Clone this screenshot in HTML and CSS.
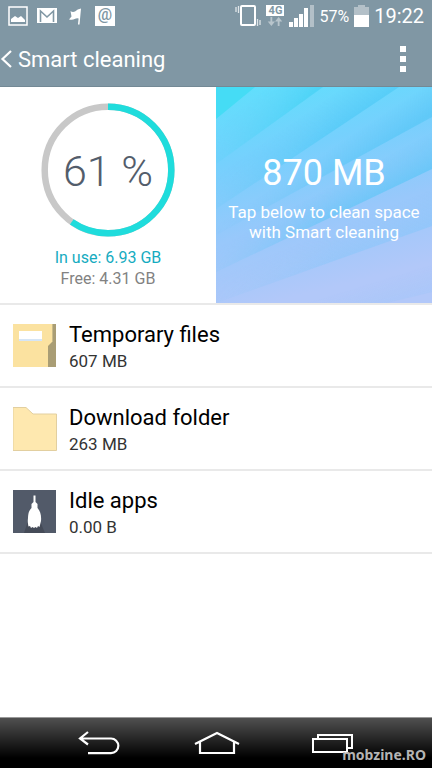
FILE: index.html
```html
<!DOCTYPE html>
<html lang="en">
<head>
<meta charset="utf-8">
<meta name="viewport" content="width=device-width, initial-scale=1">
<title>Smart cleaning</title>
<link rel="stylesheet" href="styles.css">
</head>
<body>
<header class="header">
  <div class="status">
    <div class="status-left">
      <svg width="20" height="20" viewBox="0 0 20 20"><rect x="1" y="1" width="18" height="18" fill="none" stroke="#fff" stroke-width="1.5"/><path d="M3 16v-3l4-3 3 2 3-2 4 4v2z" fill="#fff"/></svg>
      <svg width="20" height="20" viewBox="0 0 20 20"><path d="M0 2h20v15H0z" fill="#fff"/><path d="M3.500 16V5l6.500 6 6.500-6v11" fill="none" stroke="#8097a4" stroke-width="1.600"/></svg>
      <svg width="20" height="20" viewBox="0 0 20 20"><path d="M4.500 5q2 1.500 4.500 0.500 2.500-2.500 6-3l-1.500 16H12l.6-6q-2-.5-4 .6-2 1.200-5.600.4l2.500-3z" fill="#fff"/></svg>
      <span class="at">@</span>
    </div>
    <div class="status-right">
      <svg width="26" height="24" viewBox="0 0 26 24"><rect x="6" y="2" width="14" height="19" rx="1" fill="none" stroke="#fff" stroke-width="2"/><path d="M1 3v5M3.500 2v7M22.500 15v7M25 16v5" stroke="#dfe5e8" stroke-width="1.300"/></svg>
      <div class="network">
        <span class="network-type">4G</span>
        <svg width="16" height="10" viewBox="0 0 16 11"><path d="M3 0h2v5h3l-4 5-4-5h3zM11 10h2V5h3l-4-5-4 5h3z" fill="#b8c5cc"/></svg>
      </div>
      <svg width="25" height="24" viewBox="0 0 25 24"><path d="M0 18h4v5H0zM5 14h4v9H5zM10 10h4v13h-4zM15 4h4v19h-4z" fill="#fff"/><path d="M21 1h4v22h-4z" fill="#b3c0c8"/></svg>
      <span class="percent">57%</span>
      <svg width="15" height="24" viewBox="0 0 15 24"><path d="M4 1h7v2h4v9H0V3h4z" fill="#b3c0c8"/><path d="M0 11h15v12H0z" fill="#fff"/></svg>
      <time class="clock">19:22</time>
    </div>
  </div>
  <div class="bar">
    <button class="back" type="button">
      <svg width="12" height="20" viewBox="0 0 12 20"><path d="M11 2L2.500 10l8.500 8" fill="none" stroke="#fff" stroke-width="2.200"/></svg>
      <span>Smart cleaning</span>
    </button>
    <button class="more" type="button" aria-label="More options">
      <svg width="6" height="26" viewBox="0 0 6 26"><path d="M0 0h6v6H0zM0 10h6v6H0zM0 20h6v6H0z" fill="#fff"/></svg>
    </button>
  </div>
</header>
<main class="content">
  <section class="summary">
    <div class="usage">
      <div class="ring">
        <svg class="ring-art" viewBox="0 0 134 134"><circle cx="67" cy="67" r="63.300" fill="none" stroke="#c8c8c8" stroke-width="6.500"/><circle cx="67" cy="67" r="63.300" fill="none" stroke="#1fdcdc" stroke-width="6.500" pathLength="100" stroke-dasharray="59.700 100" transform="rotate(-90 67 67)"/></svg>
        <span class="ring-value">61 %</span>
      </div>
      <p class="used">In use: 6.93 GB</p>
      <p class="free">Free: 4.31 GB</p>
    </div>
    <button class="clean" type="button">
      <svg class="rays" viewBox="0 0 216 216" preserveAspectRatio="none">
        <defs>
          <linearGradient id="base" x1="0" y1="0" x2=".25" y2="1"><stop offset="0" stop-color="#5ee0fc"/><stop offset=".35" stop-color="#76d0fd"/><stop offset=".68" stop-color="#98c8fb"/><stop offset="1" stop-color="#b2c8f9"/></linearGradient>
          <linearGradient id="r2" gradientUnits="userSpaceOnUse" x1="33" y1="15" x2="53" y2="40"><stop offset="0" stop-color="#48d2f5" stop-opacity="0"/><stop offset="1" stop-color="#48d2f5" stop-opacity=".9"/></linearGradient>
          <linearGradient id="r3" gradientUnits="userSpaceOnUse" x1="83" y1="31" x2="103" y2="60"><stop offset="0" stop-color="#4ac8f5" stop-opacity="0"/><stop offset="1" stop-color="#4ac8f5" stop-opacity=".7"/></linearGradient>
          <linearGradient id="r4" gradientUnits="userSpaceOnUse" x1="118" y1="60" x2="132" y2="81"><stop offset="0" stop-color="#52c5f5" stop-opacity="0"/><stop offset="1" stop-color="#52c5f5" stop-opacity=".6"/></linearGradient>
          <linearGradient id="r5" gradientUnits="userSpaceOnUse" x1="108" y1="103" x2="123" y2="131"><stop offset="0" stop-color="#58c5f6" stop-opacity="0"/><stop offset="1" stop-color="#58c5f6" stop-opacity=".65"/></linearGradient>
          <linearGradient id="r6" gradientUnits="userSpaceOnUse" x1="110" y1="145" x2="123" y2="177"><stop offset="0" stop-color="#78c5fa" stop-opacity="0"/><stop offset="1" stop-color="#78c5fa" stop-opacity=".4"/></linearGradient>
          <linearGradient id="r7" gradientUnits="userSpaceOnUse" x1="190" y1="185" x2="198" y2="211"><stop offset="0" stop-color="#8dc4fa" stop-opacity="0"/><stop offset="1" stop-color="#8dc4fa" stop-opacity=".2"/></linearGradient>
          <linearGradient id="fade"><stop offset="0" stop-color="#222"/><stop offset=".55" stop-color="#fff"/></linearGradient>
          <mask id="soft"><path d="M0 0h216v216H0z" fill="url(#fade)"/></mask>
        </defs>
        <path d="M0 0h216v216H0z" fill="url(#base)"/>
        <path d="M0 0h39L0 32z" fill="#45dcf5"/>
        <g mask="url(#soft)">
          <path d="M39 0h68L0 77V32z" fill="url(#r2)"/>
          <path d="M107 0h76L0 122V77z" fill="url(#r3)"/>
          <path d="M183 0h33v30L0 148v-26z" fill="url(#r4)"/>
          <path d="M216 30v52L0 185v-37z" fill="url(#r5)"/>
          <path d="M216 82v57L0 216v-31z" fill="url(#r6)"/>
          <path d="M216 139v66l-45 11H0z" fill="url(#r7)"/>
        </g>
      </svg>
      <span class="clean-size">870 MB</span>
      <span class="clean-text">Tap below to clean space with Smart cleaning</span>
    </button>
  </section>
  <ul class="list">
    <li><a class="row" href="#temporary">
      <svg width="44" height="44" viewBox="0 0 44 44"><path d="M0 0h43v43H0z" fill="#fbe2a0"/><path d="M39 0h4v43h-8V22l4-4z" fill="#a99d75"/><path d="M39 0h1v18h-1z" fill="#c9ba88"/><path d="M6 7h23v10H6z" fill="#fff"/><path d="M6 15h23v2H6z" fill="#d5e5f6"/></svg>
      <span class="label"><span class="name">Temporary files</span><span class="size">607 MB</span></span>
    </a></li>
    <li><a class="row" href="#downloads">
      <svg width="44" height="44" viewBox="0 0 44 44"><path d="M0 .5h13L20 7h23.500v36.500H0z" fill="#fee8af" stroke="#e2cfa0"/></svg>
      <span class="label"><span class="name">Download folder</span><span class="size">263 MB</span></span>
    </a></li>
    <li><a class="row" href="#idle">
      <svg width="44" height="44" viewBox="0 0 44 44"><path d="M0 0h43v43H0z" fill="#525a69"/><path d="M15 31l-4 12h21l-5-12z" fill="#454b58"/><path d="M20.500 5.500h2V12l2 2v4c3 3 4 8 3.500 13l-1.500 6-1.500-1-1 2-1.500-1-1.500 1-1.500-1-1.500 1-1-2-1.500.5C15 34 14.500 32 15 28c.3-5 1-7.500 3.500-10v-4l2-2z" fill="#fff"/></svg>
      <span class="label"><span class="name">Idle apps</span><span class="size">0.00 B</span></span>
    </a></li>
  </ul>
</main>
<nav class="nav">
  <button type="button" aria-label="Back"><svg width="44" height="26" viewBox="0 0 44 26"><path d="M10 2L2 8.500l8 6M3 8.500h30a7.300 7.300 0 0 1 0 14.700H10" fill="none" stroke="#fff" stroke-width="2.200"/></svg></button>
  <button type="button" aria-label="Home"><svg width="46" height="26" viewBox="0 0 46 26"><path d="M1 14L23 3l22 11M6 12v11h34V12" fill="none" stroke="#fff" stroke-width="2.200"/></svg></button>
  <button type="button" aria-label="Recent apps"><svg width="42" height="26" viewBox="0 0 42 26"><path d="M1 9h34v13H1zM6 8V5h34v13h-4" fill="none" stroke="#fff" stroke-width="2"/></svg></button>
  <span class="watermark">mobzine.RO</span>
</nav>
</body>
</html>
```
FILE: styles.css
```css
* { box-sizing: border-box; }

body {
  margin: 0;
  min-height: 100vh;
  display: flex;
  flex-direction: column;
  background: #fff;
  color: #000;
  font-family: Roboto, "Noto Sans", sans-serif;
}

button {
  margin: 0;
  padding: 0;
  border: 0;
  background: none;
  color: inherit;
  font: inherit;
}

svg { display: block; flex: none; }
p { margin: 0; }

.header {
  background: #8097a4;
  border-bottom: 1px solid #738995;
  color: #fff;
}

.status {
  display: flex;
  justify-content: space-between;
  height: 32px;
  padding: 0 8px;
}

.status-left, .status-right { display: flex; align-items: center; }
.status-left { gap: 9px; }
.status-right { gap: 5px; }

.at {
  width: 20px;
  height: 20px;
  background: #fff;
  color: #8097a4;
  font-size: 16px;
  font-weight: 500;
  line-height: 18px;
  text-align: center;
}

.network {
  display: flex;
  flex-direction: column;
  align-items: center;
  gap: 1px;
}

.network-type {
  width: 18px;
  background: #fff;
  color: #8097a4;
  font-size: 11px;
  font-weight: 700;
  line-height: 11px;
  text-align: center;
}

.percent { font-size: 16px; }
.clock { font-size: 20px; }

.bar {
  display: flex;
  align-items: center;
  justify-content: space-between;
  height: 54px;
  padding: 0 26px 0 0;
}

.back {
  display: flex;
  align-items: center;
  gap: 6px;
  font-size: 22px;
}

.content { flex: 1; }

.summary {
  display: grid;
  grid-template-columns: 1fr 1fr;
  border-bottom: 2px solid #e9e9e9;
}

.usage {
  display: flex;
  flex-direction: column;
  align-items: center;
  padding: 16px 0 14px;
  font-size: 16px;
  line-height: 21px;
}

.ring {
  display: grid;
  place-items: center;
  width: 134px;
  margin-bottom: 10px;
  color: #535d6b;
  font-size: 43px;
  font-weight: 300;
}

.ring > * { grid-area: 1 / 1; }
.ring-art { width: 100%; }
.ring-value { padding-top: 2px; }
.used { color: #15abc0; }
.free { color: #828282; }

.clean {
  display: grid;
  grid-template-rows: 1fr auto auto 1fr;
  justify-items: center;
  min-height: 216px;
  color: #fff;
}

.rays {
  grid-area: 1 / 1 / -1 / -1;
  width: 100%;
  height: 100%;
}

.clean-size {
  grid-area: 2 / 1;
  font-size: 36px;
  line-height: 50px;
}

.clean-text {
  grid-area: 3 / 1;
  padding: 4px 8px 0;
  font-size: 17px;
  line-height: 20px;
}

.list {
  margin: 0;
  padding: 0;
  list-style: none;
}

.row {
  display: flex;
  align-items: center;
  gap: 12px;
  height: 83px;
  padding: 0 13px;
  border-bottom: 2px solid #e9e9e9;
  color: #000;
  text-decoration: none;
}

.label { display: flex; flex-direction: column; padding-top: 2px; }
.name { font-size: 22px; line-height: 28px; }
.size { color: #333; font-size: 17px; line-height: 24px; }

.nav {
  position: relative;
  display: flex;
  justify-content: center;
  align-items: center;
  gap: 72px;
  height: 51px;
  border-top: 1px solid #999;
  background: linear-gradient(#505050, #000 80%);
}

.watermark {
  position: absolute;
  right: 6px;
  bottom: 4px;
  color: #b4b4b4;
  font-family: "Noto Sans", sans-serif;
  font-size: 14px;
  font-weight: 700;
  line-height: 18px;
}
```
